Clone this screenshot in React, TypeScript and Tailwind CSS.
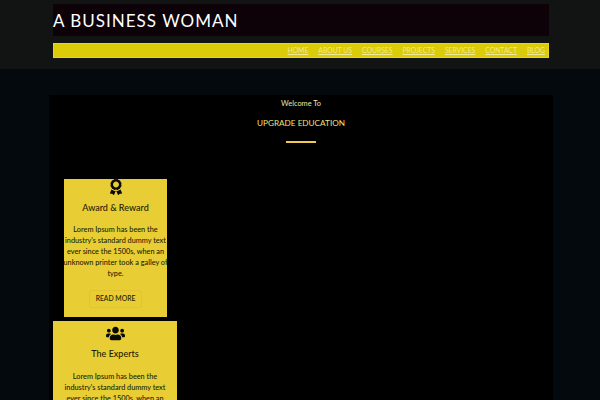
import { FaAward, FaUsers } from "react-icons/fa";

const navItems = ["HOME", "ABOUT US", "COURSES", "PROJECTS", "SERVICES", "CONTACT", "BLOG"];

const bodyClass = "mt-[9.5px] w-[106px] shrink-0 text-center text-[7.3px] font-medium leading-[11px] text-[#211d05]";
const headingClass = "text-[9px] font-medium leading-[14px] text-[#1d1a05]";

export default function App() {
  return (
    <div className="h-[400px] w-[600px] overflow-hidden bg-[#03090c] font-['Lato','Open_Sans',sans-serif]">
      <header className="h-[69px] bg-[#121313] pl-[53px] pr-[51px] pt-[4px]">
        <div className="flex h-[32px] items-center bg-[#0c0208]">
          <h1 className="text-[17px] font-normal leading-none tracking-[1px] text-white">
            A BUSINESS WOMAN
          </h1>
        </div>
        <nav className="mt-[7px] flex h-[15px] items-center justify-end gap-[10px] border border-[#e8d520] bg-[#dccb08] pr-[3px]">
          {navItems.map((item) => (
            <a key={item} className="text-[6.8px] leading-none text-[#f2ea90] underline">
              {item}
            </a>
          ))}
        </nav>
      </header>

      <main className="ml-[49px] mt-[26px] h-[305px] w-[504px] bg-black pt-[3px]">
        <p className="text-center text-[7.4px] leading-[11px] text-[#eee7a0]">Welcome To</p>
        <h2 className="mt-[7px] text-center text-[8.2px] font-normal leading-[14px] text-[#efe47a]">UPGRADE EDUCATION</h2>
        <div className="mx-auto mt-[11px] h-[2px] w-[30px] bg-[#eecb4a]" />

        <section className="ml-[15px] mt-[36px] flex h-[138px] w-[103px] flex-col items-center bg-[#e8cd34]">
          <FaAward className="shrink-0 text-[16px] text-[#0b0b05]" />
          <h3 className={`${headingClass} mt-[5.5px]`}>Award &amp; Reward</h3>
          <p className={bodyClass}>
            Lorem Ipsum has been the industry's standard dummy text ever since the 1500s, when an unknown printer took a galley of type.
          </p>
          <button className="mt-[10.5px] h-[18px] w-[53px] shrink-0 rounded-[3px] border border-[#e3c331] text-[6.8px] font-medium leading-none text-[#211d05]">
            READ MORE
          </button>
        </section>

        <section className="ml-[4px] mt-[4px] flex w-[124px] flex-col items-center bg-[#e8cd34] pt-[2.5px]">
          <FaUsers className="shrink-0 text-[19px] text-[#0b0b05]" />
          <h3 className={`${headingClass} mt-[4.5px]`}>The Experts</h3>
          <p className={bodyClass}>
            Lorem Ipsum has been the industry's standard dummy text ever since the 1500s, when an unknown printer took a galley of type.
          </p>
        </section>
      </main>
    </div>
  );
}
